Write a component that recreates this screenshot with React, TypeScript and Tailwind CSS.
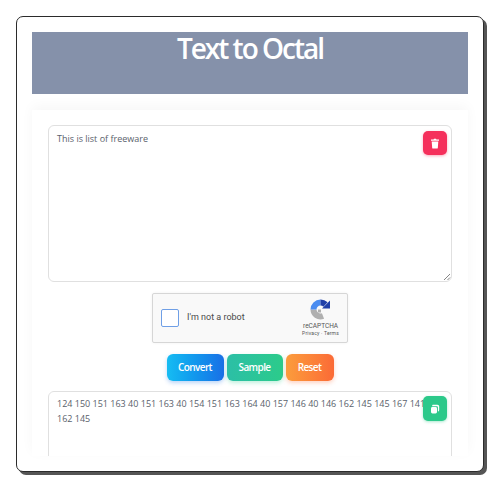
import React from 'react';

const App: React.FC = () => {
  return (
    <div className="w-[500px] h-[488px] bg-white p-4 font-['Open_Sans',sans-serif]">
      <div className="w-[468px] h-[456px] bg-white border border-[#2b2b2b] rounded-[7px] px-[15px] py-[15px] shadow-[3px_3px_0_#555555]">
        <h1 className="h-[62px] bg-[#8591aa] text-center text-white text-[28px] leading-[32px] font-semibold tracking-[-2px]">
          Text to Octal
        </h1>

        <div className="mt-4 px-4 pt-[15px] shadow-[0_-4px_12px_rgba(0,0,0,0.035)]">
          <div className="relative h-[157px] border border-[#e0e0e0] rounded-[6px] px-2 py-[6px] text-[9px] leading-[14px] text-[#59616b]">
            This is list of freeware
            <button className="absolute top-[5px] right-[4px] w-6 h-6 rounded-[5px] bg-[#f5305c] flex items-center justify-center shadow-[0_1px_3px_rgba(245,48,92,0.4)]">
              <svg width="10" height="11" viewBox="0 0 10 11" fill="#ffffff">
                <path d="M1 1.6h2.6L4 .8h2l.4.8H9v1.2H1z" />
                <path d="M1.7 3.4h6.6l-.5 6.5a.8.8 0 0 1-.8.7H3a.8.8 0 0 1-.8-.7z" />
              </svg>
            </button>
            <svg className="absolute right-0 bottom-0" width="9" height="9" viewBox="0 0 9 9" stroke="#666666" strokeWidth="0.8">
              <path d="M8 2 2 8M8 5.5 5.5 8" />
            </svg>
          </div>

          <div className="mt-[11px] mx-auto w-[196px] h-[50px] bg-[#f9f9f9] border border-[#d6d6d6] rounded-[2px] flex items-center pl-2 pr-[8px] shadow-[0_0_3px_rgba(0,0,0,0.06)]">
            <div className="w-[18px] h-[18px] bg-white border border-[#6f9fe6] rounded-[2px]" />
            <span className="ml-[8px] text-[9px] text-[#4a4a4a] font-['Roboto',sans-serif]">I&apos;m not a robot</span>
            <div className="ml-auto flex flex-col items-center font-['Roboto',sans-serif]">
              <svg width="21" height="21" viewBox="0 0 21 21" className="mb-[2px]" fill="none" strokeWidth="6">
                <path d="M3.5 10.5a7 7 0 0 0 9.5 6.5" stroke="#b0b0b0" />
                <path d="M3.5 10.5a7 7 0 0 1 7-7" stroke="#4a8cf0" />
                <path d="M10.5 3.5a7 7 0 0 1 5 2" stroke="#1f3fa8" />
                <path d="M20 1.5v8h-8z" fill="#1f3fa8" />
                <path d="M8 10.5h3v3H8z" fill="#b0b0b0" />
              </svg>
              <span className="text-[6.5px] leading-[8px] text-[#555555]">reCAPTCHA</span>
              <span className="text-[5px] leading-[7px] tracking-[0.2px] text-[#555555]">Privacy · Terms</span>
            </div>
          </div>

          <div className="mt-[11px] flex justify-center gap-[3px] text-white text-[10px] font-semibold tracking-[-0.6px]">
            <button className="w-[57px] h-[27px] rounded-[6px] bg-linear-to-r from-[#17bcf2] to-[#1a6fe6] shadow-[0_2px_4px_rgba(26,111,230,0.3)]">Convert</button>
            <button className="w-[56px] h-[27px] rounded-[6px] bg-linear-to-r from-[#2cbfa6] to-[#2ccb8a] shadow-[0_2px_4px_rgba(44,203,138,0.3)]">Sample</button>
            <button className="w-[48px] h-[27px] rounded-[6px] bg-linear-to-r from-[#fb9c3c] to-[#fb6a36] shadow-[0_2px_4px_rgba(251,106,54,0.3)]">Reset</button>
          </div>

          <div className="mt-[10px] h-[65px] overflow-hidden">
            <div className="relative h-[158px] border border-[#e0e0e0] rounded-[6px] pl-2 pr-[14px] py-[4px] text-[9px] leading-[15px] text-[#59616b]">
              124 150 151 163 40 151 163 40 154 151 163 164 40 157 146 40 146 162 145 145 167 141 162 145
              <button className="absolute top-[4px] right-[4px] w-6 h-[25px] rounded-[5px] bg-[#2cc98a] flex items-center justify-center shadow-[0_1px_3px_rgba(44,201,138,0.4)]">
                <svg width="10" height="10" viewBox="0 0 10 10" fill="#ffffff">
                  <path d="M3 .8h4.4c1 0 1.8.8 1.8 1.8V6c0 .9-.6 1.5-1.3 1.6V3.4c0-.7-.5-1.2-1.2-1.2H2.1C2.2 1.4 2.5.8 3 .8z" />
                  <rect x="1" y="3" width="6" height="6.4" rx="1.4" />
                </svg>
              </button>
            </div>
          </div>
        </div>
      </div>
    </div>
  );
};

export default App;
